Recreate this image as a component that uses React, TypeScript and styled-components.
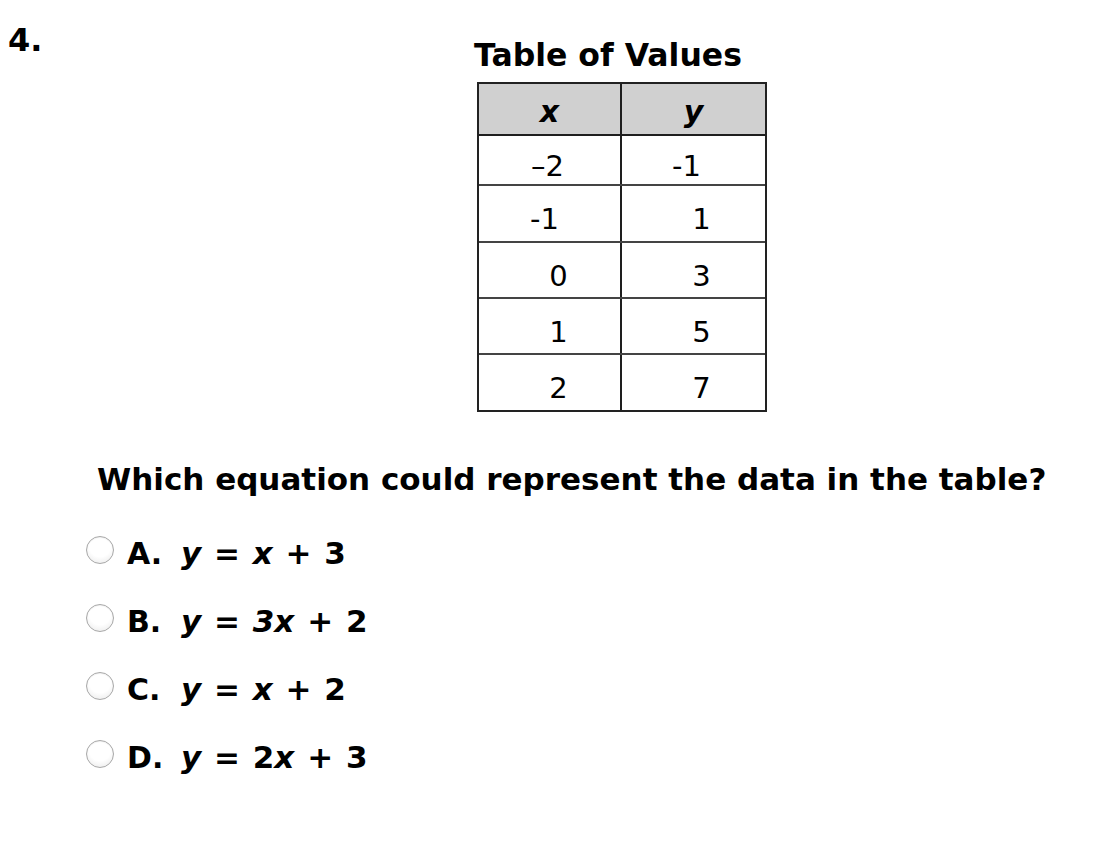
import React from 'react';
import styled, { createGlobalStyle } from 'styled-components';

const GlobalStyle = createGlobalStyle`
  *, *::before, *::after {
    box-sizing: border-box;
  }
  html, body {
    margin: 0;
    padding: 0;
    background: #ffffff;
  }
  body {
    font-family: 'DejaVu Sans', Verdana, sans-serif;
    color: #000;
  }
`;

type Row = { x: string; y: string; xShift?: number; yShift?: number; height: number };

const rows: Row[] = [
  { x: '\u20132', y: '-1', xShift: -2, yShift: -7, height: 48 },
  { x: '-1', y: '1', xShift: -5, yShift: 8, height: 55 },
  { x: '0', y: '3', xShift: 9, yShift: 8, height: 54 },
  { x: '1', y: '5', xShift: 9, yShift: 8, height: 54 },
  { x: '2', y: '7', xShift: 9, yShift: 8, height: 55 },
];

const choices = [
  { letter: 'A.', eq: <><i>y</i> = <i>x</i> + 3</> },
  { letter: 'B.', eq: <><i>y</i> = <i>3x</i> + 2</> },
  { letter: 'C.', eq: <><i>y</i> = <i>x</i> + 2</> },
  { letter: 'D.', eq: <><i>y</i> = 2<i>x</i> + 3</> },
];

const App = () => {
  return (
    <Page>
      <GlobalStyle />
      <Top>
        <Number>4.</Number>
        <TableSection>
          <Title>Table of Values</Title>
          <Table>
            <HeadRow>
              <HeadCell $divider>x</HeadCell>
              <HeadCell>y</HeadCell>
            </HeadRow>
            {rows.map((r, i) => (
              <DataRow key={i} $height={r.height} $last={i === rows.length - 1}>
                <Cell $divider $shift={r.xShift ?? 0}>{r.x}</Cell>
                <Cell $shift={r.yShift ?? 0}>{r.y}</Cell>
              </DataRow>
            ))}
          </Table>
        </TableSection>
      </Top>
      <Question>Which equation could represent the data in the table?</Question>
      <Choices>
        {choices.map((c) => (
          <Choice key={c.letter}>
            <Radio />
            <Letter>{c.letter}</Letter>
            <Equation>{c.eq}</Equation>
          </Choice>
        ))}
      </Choices>
    </Page>
  );
};

const Page = styled.div`
  width: 1106px;
  min-height: 856px;
  display: flex;
  flex-direction: column;
`;

const Top = styled.div`
  display: flex;
  flex-direction: row;
  align-items: flex-start;
`;

const Number = styled.div`
  width: 477px;
  padding-left: 8px;
  padding-top: 22px;
  font-size: 32px;
  font-weight: bold;
  line-height: 36px;
`;

const TableSection = styled.div`
  display: flex;
  flex-direction: column;
  padding-top: 37px;
`;

const Title = styled.div`
  font-size: 31.5px;
  font-weight: bold;
  line-height: 36px;
  margin-bottom: 9px;
  margin-left: -3px;
`;

const Table = styled.div`
  width: 290px;
  border: 2px solid #222;
  display: flex;
  flex-direction: column;
`;

const HeadRow = styled.div`
  display: grid;
  grid-template-columns: 143px 1fr;
  height: 52px;
  background: #d0d0d0;
  border-bottom: 2px solid #1e1e1e;
`;

const HeadCell = styled.div<{ $divider?: boolean }>`
  display: flex;
  align-items: center;
  justify-content: center;
  padding-top: 4px;
  font-size: 30px;
  font-weight: bold;
  font-style: italic;
  border-right: ${(p) => (p.$divider ? '2px solid #1e1e1e' : 'none')};
`;

const DataRow = styled.div<{ $height: number; $last?: boolean }>`
  display: grid;
  grid-template-columns: 143px 1fr;
  height: ${(p) => p.$height + (p.$last ? 0 : 2)}px;
  border-bottom: ${(p) => (p.$last ? 'none' : '2px solid #444')};
`;

const Cell = styled.div<{ $divider?: boolean; $shift: number }>`
  display: flex;
  align-items: center;
  justify-content: center;
  padding-top: 11px;
  padding-left: ${(p) => (p.$shift > 0 ? p.$shift * 2 : 0)}px;
  padding-right: ${(p) => (p.$shift < 0 ? -p.$shift * 2 : 0)}px;
  font-size: 29px;
  border-right: ${(p) => (p.$divider ? '2px solid #1e1e1e' : 'none')};
`;

const Question = styled.div`
  margin-top: 49px;
  padding-left: 97px;
  font-size: 31px;
  font-weight: bold;
  line-height: 36px;
`;

const Choices = styled.div`
  display: flex;
  flex-direction: column;
  gap: 32px;
  margin-top: 38px;
  padding-left: 86px;
`;

const Choice = styled.div`
  display: flex;
  flex-direction: row;
  align-items: center;
  height: 36px;
`;

const Radio = styled.span`
  width: 28px;
  height: 28px;
  border-radius: 50%;
  border: 1px solid #a8a8a8;
  background: radial-gradient(circle at 50% 35%, #ffffff 50%, #e6e6e6 100%);
  box-shadow: inset 0 1px 1px rgba(0, 0, 0, 0.06);
  margin-right: 13px;
  margin-bottom: 6px;
  flex-shrink: 0;
`;

const Letter = styled.span`
  font-size: 30px;
  font-weight: bold;
  width: 54px;
`;

const Equation = styled.span`
  font-size: 31px;
  font-weight: bold;
  white-space: pre;
  word-spacing: 2px;
`;

export default App;
